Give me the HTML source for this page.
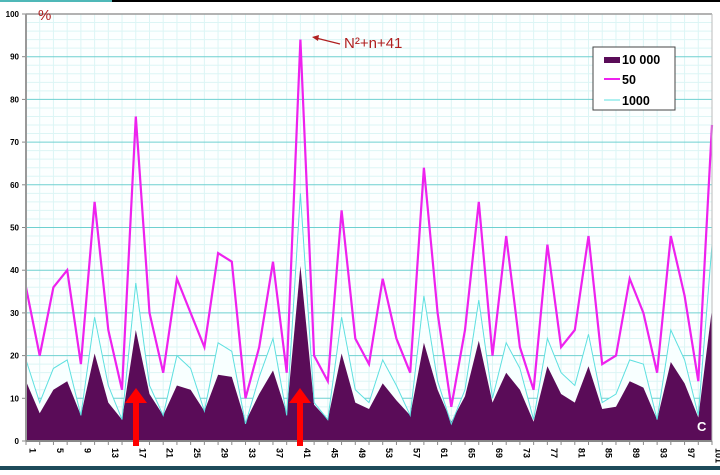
<!DOCTYPE html>
<html><head><meta charset="utf-8"><style>
body{margin:0;width:720px;height:470px;overflow:hidden;background:#fff;font-family:"Liberation Sans",sans-serif}
</style></head><body>
<svg id="s" width="720" height="470" xmlns="http://www.w3.org/2000/svg"></svg>
<script>
const m=[36,20,36,40,18,56,26,12,76,30,16,38,30,22,44,42,10,22,42,16,94,20,14,54,24,18,38,24,16,64,30,8,26,56,20,48,22,12,46,22,26,48,18,20,38,30,16,48,34,14,74];
const c=[19,9,17,19,6,29,13,5,37,13,6,20,17,7,23,21,4,15,24,6,58,9,5,29,12,9,19,13,6,34,14,4,12,33,10,23,17,5,24,16,13,25,9,11,19,18,5,26,19,6,46];
const d=[14,6.5,12,14,6,20.5,9,5,26,11,6,13,12,7,15.5,15,4.5,11,16.5,6.5,41,8.5,5,20.5,9,7.5,13.5,9.5,6,23,12,4.5,10.5,23.5,9,16,12,4.5,17.5,11,9,17.5,7.5,8,14,12.5,5,18.5,13.5,5.5,31];
const X0=26,X1=712,Y0=441,Y100=14,st=(X1-X0)/50;
const X=i=>X0+i*st, Y=v=>Y0-(Y0-Y100)*v/100;
let h='';
h+='<rect x="0" y="0" width="112" height="2" fill="#4fb8b8"/><rect x="112" y="0" width="608" height="2" fill="#000"/>';
h+=`<rect x="${X0}" y="${Y100}" width="${X1-X0}" height="${Y0-Y100}" fill="#fcffff"/>`;
for(let i=0;i<=50;i++)h+=`<line x1="${X(i)}" y1="${Y100}" x2="${X(i)}" y2="${Y0}" stroke="#dcf5f5" stroke-width="1"/>`;
for(let v=0;v<=100;v+=2)h+=`<line x1="${X0}" y1="${Y(v)}" x2="${X1}" y2="${Y(v)}" stroke="${v%10?'#dcf5f5':'#6fd0d0'}" stroke-width="1"/>`;
const pts=a=>a.map((v,i)=>X(i).toFixed(1)+','+Y(v).toFixed(1)).join(' ');
h+=`<polygon points="${X0},${Y0} ${pts(c)} ${X1},${Y0}" fill="#f8ffff"/>`;
h+=`<polygon points="${X0},${Y0} ${pts(d)} ${X1},${Y0}" fill="#5a0c58"/>`;
h+=`<polyline points="${pts(c)}" fill="none" stroke="#5ee0e0" stroke-width="1"/>`;
h+=`<polyline points="${pts(m)}" fill="none" stroke="#ee22ee" stroke-width="2.2"/>`;
for(let v=0;v<=100;v+=10)h+=`<line x1="${X0-4}" y1="${Y(v)}" x2="${X0}" y2="${Y(v)}" stroke="#888"/><text x="${X0-7}" y="${Y(v)+3}" font-size="8" font-weight="bold" text-anchor="end">${v}</text>`;
h+=`<line x1="${X0}" y1="${Y100}" x2="${X0}" y2="${Y0}" stroke="#999" stroke-width="2"/>`;
h+=`<line x1="${X0}" y1="${Y100}" x2="${X1}" y2="${Y100}" stroke="#999" stroke-width="1.5"/>`;
h+=`<line x1="${X1}" y1="${Y100}" x2="${X1}" y2="${Y0}" stroke="#bbb" stroke-width="1"/>`;
h+=`<line x1="${X0}" y1="${Y0}" x2="${X1}" y2="${Y0}" stroke="#888" stroke-width="2"/>`;
for(let i=0;i<=50;i++){h+=`<line x1="${X(i)}" y1="${Y0}" x2="${X(i)}" y2="${Y0+4}" stroke="#888"/>`;
 if(i%2==0){const n=2*i+1;h+=`<text transform="translate(${X(i)+3.5},${Y0+7}) rotate(90)" font-size="9" font-weight="bold">${n}</text>`;}}
h+='<text x="38" y="20" font-size="15" fill="#b02020">%</text>';
h+='<text x="344" y="48" font-size="15" fill="#b02020">N²+n+41</text>';
h+='<line x1="340" y1="44" x2="316" y2="38" stroke="#b02020" stroke-width="1.3"/><polygon points="312,37 319,35 318,41" fill="#b02020"/>';
for(const x of [136,300])h+=`<rect x="${x-3}" y="400" width="6" height="46" fill="#f00"/><polygon points="${x-11},403 ${x},388 ${x+11},403" fill="#f00"/>`;
h+='<rect x="593" y="47" width="82" height="63" fill="#fff" stroke="#444" stroke-width="1"/>';
h+='<rect x="604" y="57" width="16" height="6" fill="#5a0c58"/><text x="622" y="64" font-size="12.5" font-weight="bold">10 000</text>';
h+='<line x1="604" y1="79" x2="620" y2="79" stroke="#ee22ee" stroke-width="2"/><text x="622" y="84" font-size="12.5" font-weight="bold">50</text>';
h+='<line x1="604" y1="100" x2="620" y2="100" stroke="#5ee0e0" stroke-width="1"/><text x="622" y="105" font-size="12.5" font-weight="bold">1000</text>';
h+='<text x="697" y="431" font-size="13" font-weight="bold" fill="#fff">C</text>';
h+='<rect x="0" y="466" width="720" height="4" fill="#1d4b5a"/>';
document.getElementById('s').innerHTML=h;
</script>
</body></html>
